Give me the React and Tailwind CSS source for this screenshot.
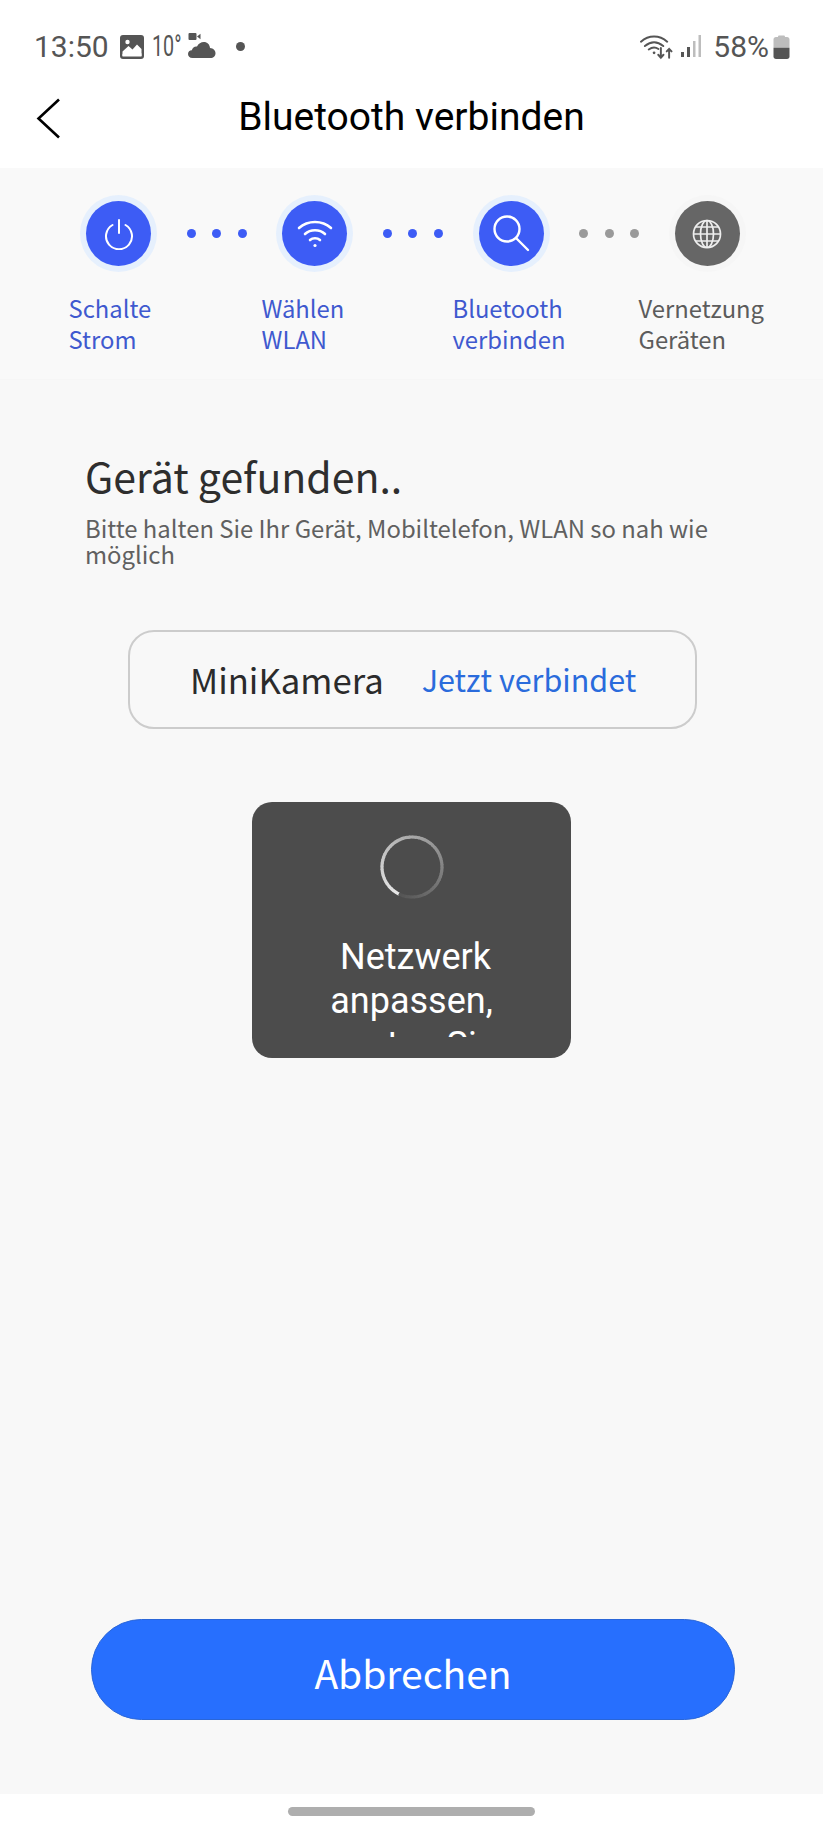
const cjk = "font-['Noto_Sans_CJK_SC','Noto_Sans',sans-serif]";
const roboto = "font-['Roboto',sans-serif]";

function Dots({ gray }) {
  const color = gray ? "bg-[#9a9a9a]" : "bg-[#3d5cf5]";
  return (
    <div className="flex flex-1 items-center justify-center gap-[16.5px]">
      <span className={`h-[9px] w-[9px] rounded-full ${color}`} />
      <span className={`h-[9px] w-[9px] rounded-full ${color}`} />
      <span className={`h-[9px] w-[9px] rounded-full ${color}`} />
    </div>
  );
}

function StepCircle({ children, gray }) {
  return (
    <div
      className={`flex h-[65px] w-[65px] shrink-0 items-center justify-center rounded-full ${
        gray ? "bg-[#666666] ring-[6px] ring-[#f6f6f6]" : "bg-[#3d5cf5] ring-[6px] ring-[#e6f0fd]"
      }`}
    >
      {children}
    </div>
  );
}

function StepLabel({ lines, gray }) {
  return (
    <div className={`text-[23.8px] leading-[31px] ${gray ? "text-[#5c5c5c]" : "text-[#3f59cf]"}`}>
      {lines[0]}
      <br />
      {lines[1]}
    </div>
  );
}

// sweep of short arcs, bright at the head (7 o'clock) and fading clockwise
function Spinner() {
  const count = 60;
  const r = 30;
  const start = 205; // degrees clockwise from 12 o'clock
  const segments = [];
  for (let i = 0; i < count; i++) {
    const a0 = ((start + (i * 360) / count) * Math.PI) / 180;
    const a1 = ((start + ((i + 1.2) * 360) / count) * Math.PI) / 180;
    const shade = Math.round(232 - (i / count) * 150);
    segments.push(
      <path
        key={i}
        d={`M${32 + r * Math.sin(a0)} ${32 - r * Math.cos(a0)} A${r} ${r} 0 0 1 ${32 + r * Math.sin(a1)} ${32 - r * Math.cos(a1)}`}
        stroke={`rgb(${shade},${shade},${shade})`}
      />
    );
  }
  return (
    <svg width="64" height="64" viewBox="0 0 64 64" fill="none" strokeWidth="3.2">
      {segments}
    </svg>
  );
}

function StatusBar() {
  return (
    <div className={`flex h-[80px] items-center justify-between pl-[34px] pr-[33px] pt-[13px] text-[#555555] ${roboto}`}>
      <div className="flex items-center">
        <span className="text-[30px] leading-none">13:50</span>
        <svg className="ml-[11px]" width="24" height="24" viewBox="0 0 24 24">
          <rect x="0" y="0" width="24" height="24" rx="3" fill="#555555" />
          <path d="M2.5 21 L2.5 16.5 L8.5 11 L12.5 14.5 L17 9.5 L21.5 14 L21.5 21 Z" fill="#ffffff" />
          <path d="M2.5 21.5 L2.5 19 L8.5 14.5 L12.5 18 L16.5 14.5 L21.5 18.5 L21.5 21.5 Z" fill="#ffffff" />
          <circle cx="7.5" cy="7" r="2.2" fill="#ffffff" />
        </svg>
        <span className="ml-[8px] w-[29px] origin-left scale-x-[0.68] whitespace-nowrap text-[29px] leading-none">10°</span>
        <svg className="ml-[7px] mt-[-2px]" width="28" height="26" viewBox="0 0 28 26">
          <rect x="0.5" y="0" width="8" height="7" rx="1" fill="#555555" />
          <path d="M9 3.5 L12.5 0.8 L12.5 6.2 Z" fill="#555555" />
          <path d="M4.5 25 C1.5 25 0 23 0 21 C0 18.8 1.6 17.3 3.8 17.2 C4.5 14.6 6.8 13 9 13.5 C10.4 10.6 13 9 15.8 9 C19.3 9 21.8 11.6 22 15 C25.4 15.3 27.5 17.6 27.5 20.2 C27.5 23 25.4 25 22.5 25 Z" fill="#555555" />
        </svg>
        <span className="ml-[20px] h-[9px] w-[9px] rounded-full bg-[#555555]" />
      </div>
      <div className="flex items-center">
        <svg width="33" height="26" viewBox="0 0 34 26" fill="none" stroke="#555555" strokeLinecap="round">
          <path d="M1 7.5 C9 0.5 20 0.5 28 7.5" strokeWidth="2" />
          <path d="M5 12 C11 7 18 7 24 12" strokeWidth="2" />
          <path d="M9 15.5 C12.5 13 16 13 19 15" strokeWidth="2" />
          <circle cx="14.5" cy="19" r="1.4" fill="#555555" stroke="none" />
          <path d="M21.5 14 V24 M18.8 21 L21.5 24 L24.2 21" strokeWidth="2" />
          <path d="M30 24 V15 M27.5 17.5 L30 15 L32.5 17.5" strokeWidth="2" />
        </svg>
        <svg className="ml-[7px]" width="22" height="23" viewBox="0 0 22 23">
          <rect x="1" y="17" width="3" height="5" fill="#555555" />
          <rect x="7" y="12" width="3" height="10" fill="#555555" />
          <rect x="13" y="6" width="2.5" height="16" fill="#bdbdbd" />
          <rect x="18.5" y="0" width="2.5" height="22" fill="#bdbdbd" />
        </svg>
        <span className="ml-[11px] text-[30px] leading-none">58%</span>
        <svg className="ml-[4px]" width="17" height="24" viewBox="0 0 17 24">
          <path d="M5 2 C5 1 5.5 0.5 6 0.5 H11 C11.5 0.5 12 1 12 2 H14 C15.5 2 16.5 3 16.5 4.5 V12 H0.5 V4.5 C0.5 3 1.5 2 3 2 Z" fill="#bdbdbd" />
          <path d="M0.5 12.5 H16.5 V21.5 C16.5 23 15.5 24 14 24 H3 C1.5 24 0.5 23 0.5 21.5 Z" fill="#555555" />
        </svg>
      </div>
    </div>
  );
}

export default function App() {
  return (
    <div className="flex h-[1828px] w-[823px] flex-col overflow-hidden bg-white">
      <StatusBar />

      {/* header */}
      <div className={`relative flex h-[88px] items-center justify-center pb-[14px] text-[39px] text-black ${roboto}`}>
        <svg className="absolute left-[36px] top-[18px]" width="25" height="41" viewBox="0 0 25 41" fill="none" stroke="#000000" strokeWidth="2.6">
          <path d="M23 1.5 L2.5 20.5 L23 39.5" />
        </svg>
        Bluetooth verbinden
      </div>

      <div className={`flex flex-1 flex-col bg-[#f8f8f8] ${cjk}`}>
        {/* steps */}
        <div className="h-[212px] border-b border-[#f6f6f6] bg-[#f9f9f9] pt-[33px]">
          <div className="flex w-[740px] items-center pl-[86px]">
            <StepCircle>
              <svg width="32" height="32" viewBox="0 0 32 32" fill="none" stroke="#ffffff" strokeWidth="2" strokeLinecap="round">
                <path d="M16 2 V15" />
                <path d="M9.5 7 A13 13 0 1 0 22.5 7" />
              </svg>
            </StepCircle>
            <Dots />
            <StepCircle>
              <svg width="36" height="30" viewBox="0 0 36 30" fill="none" stroke="#ffffff" strokeWidth="2.6" strokeLinecap="round">
                <path d="M2 9 C11 1 25 1 34 9" />
                <path d="M8 15 C13.5 10 22.5 10 28 15" />
                <path d="M13 21 C15.8 18.6 20.2 18.6 23 21" />
                <circle cx="18" cy="26.5" r="1.6" fill="#ffffff" stroke="none" />
              </svg>
            </StepCircle>
            <Dots />
            <StepCircle>
              <svg width="37" height="37" viewBox="0 0 37 37" fill="none" stroke="#ffffff" strokeWidth="2.4" strokeLinecap="round">
                <circle cx="14" cy="14" r="12.5" />
                <path d="M23.5 23.5 L35 35" />
              </svg>
            </StepCircle>
            <Dots gray />
            <StepCircle gray>
              <svg width="30" height="30" viewBox="0 0 30 30" fill="none" stroke="#eeeeee" strokeWidth="1.7">
                <circle cx="15" cy="15" r="13.5" />
                <ellipse cx="15" cy="15" rx="6.5" ry="13.5" />
                <path d="M15 1.5 V28.5 M1.5 15 H28.5 M3.5 8 H26.5 M3.5 22 H26.5" />
              </svg>
            </StepCircle>
          </div>
          <div className="mt-[25.5px] grid grid-cols-[193px_191px_186px_1fr] pl-[68.5px]">
            <StepLabel lines={["Schalte", "Strom"]} />
            <StepLabel lines={["Wählen", "WLAN"]} />
            <StepLabel lines={["Bluetooth", "verbinden"]} />
            <StepLabel lines={["Vernetzung", "Geräten"]} gray />
          </div>
        </div>

        {/* found */}
        <div className="mt-[70px] pl-[85px] pr-[90px]">
          <h1 className="text-[41px] font-normal leading-[50px] text-[#2e2e2e]">Gerät gefunden..</h1>
          <p className="mt-[15px] text-[23.85px] leading-[25.5px] text-[#606060]">
            Bitte halten Sie Ihr Gerät, Mobiltelefon, WLAN so nah wie möglich
          </p>
        </div>

        <div className="ml-[128px] mt-[64px] flex h-[99px] w-[569px] items-center rounded-[26px] border-2 border-[#cccccc] pl-[60px]">
          <span className="text-[34.7px] leading-none text-[#2b2b2b]">MiniKamera</span>
          <span className="ml-[38px] text-[30.5px] leading-none text-[#2a6bdc]">Jetzt verbindet</span>
        </div>

        {/* loading toast */}
        <div className={`mx-auto mt-[73px] flex h-[256px] w-[319px] flex-col items-center rounded-[20px] bg-[#4c4c4c] pt-[33px] ${roboto}`}>
          <Spinner />
          <div className="mt-[36px] h-[102px] w-[260px] overflow-hidden text-center text-[36px] leading-[44px] text-white">
            <span className="pl-[8px]">Netzwerk</span> anpassen, warten Sie
          </div>
        </div>

        <div className="mt-auto pb-[74px] pl-[91px]">
          <button className="flex h-[101px] w-[644px] items-center justify-center rounded-full border border-[#2a66d8] bg-[#276ffe] pt-[5px] text-[39px] text-white">
            Abbrechen
          </button>
        </div>
      </div>

      <div className="flex h-[34px] justify-center bg-white pt-[13px]">
        <div className="h-[9px] w-[247px] rounded-full bg-[#aeaeae]" />
      </div>
    </div>
  );
}
